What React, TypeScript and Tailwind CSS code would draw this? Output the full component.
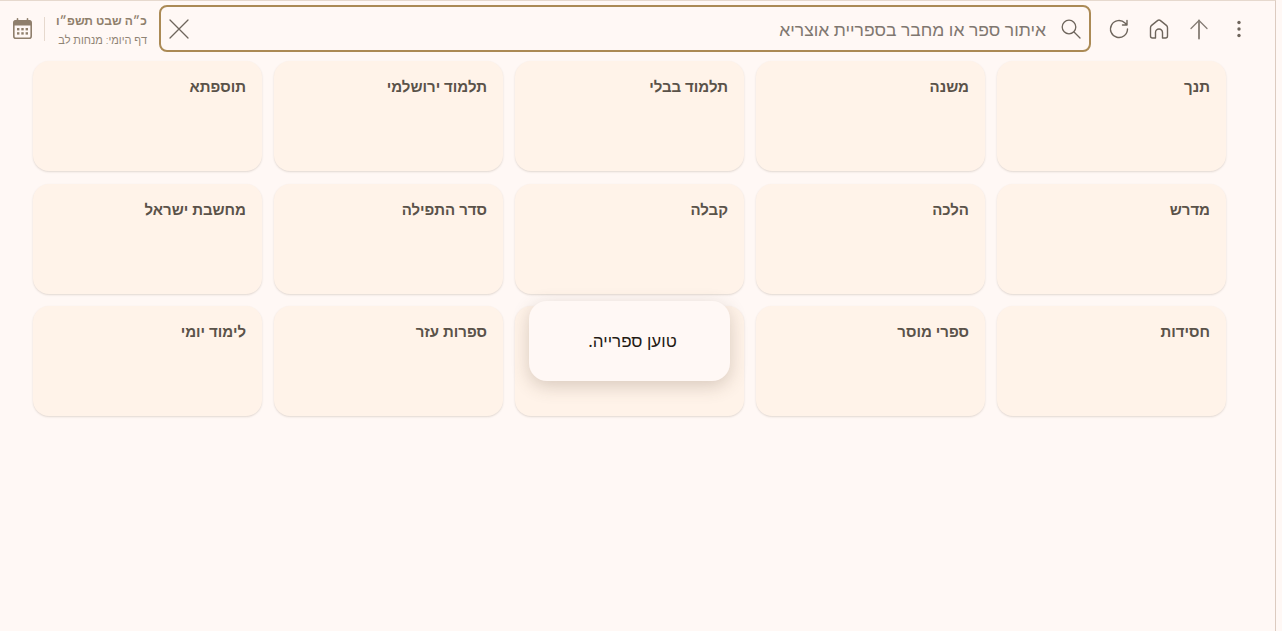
import React from 'react';

const categories = [
  'תנך', 'משנה', 'תלמוד בבלי', 'תלמוד ירושלמי', 'תוספתא',
  'מדרש', 'הלכה', 'קבלה', 'סדר התפילה', 'מחשבת ישראל',
  'חסידות', 'ספרי מוסר', '', 'ספרות עזר', 'לימוד יומי',
];

const font = "font-['Noto_Sans','Liberation_Sans',sans-serif]";

const Icon: React.FC<{ children: React.ReactNode }> = ({ children }) => (
  <svg width="24" height="24" viewBox="0 0 24 24" fill="none" stroke="currentColor" strokeWidth="1.4" strokeLinecap="round" strokeLinejoin="round">
    {children}
  </svg>
);

const CalendarIcon: React.FC = () => (
  <svg width="19" height="21" viewBox="0 0 19 21" fill="none" className="shrink-0 text-[#8f7f6c]">
    <rect x="0.8" y="2.8" width="17.4" height="17.4" rx="2" stroke="currentColor" strokeWidth="1.6" />
    <path d="M1 4a2 2 0 0 1 2-2h13a2 2 0 0 1 2 2v3.5H1z" fill="currentColor" />
    <path d="M4.5 0.8v3M14.5 0.8v3" stroke="currentColor" strokeWidth="1.6" strokeLinecap="round" />
    <g fill="currentColor">
      <rect x="4" y="10" width="2.4" height="2.4" />
      <rect x="8.3" y="10" width="2.4" height="2.4" />
      <rect x="12.6" y="10" width="2.4" height="2.4" />
      <rect x="4" y="14.2" width="2.4" height="2.4" />
      <rect x="8.3" y="14.2" width="2.4" height="2.4" />
      <rect x="12.6" y="14.2" width="2.4" height="2.4" />
    </g>
  </svg>
);

const App: React.FC = () => {
  return (
    <div dir="rtl" className={`relative h-[631px] w-[1282px] overflow-hidden bg-[#fff8f5] ${font}`}>
      <div className="mr-[6px] h-full border-t border-r border-t-[#e6d9ce] border-r-[#dccbc0]">
        {/* Top bar */}
        <div className="flex h-[55px] items-center pr-[16px] pl-[13px] text-[#6e655c]">
          <button className="flex h-10 w-10 items-center justify-center">
            <svg width="24" height="24" viewBox="0 0 24 24" fill="currentColor">
              <circle cx="12" cy="5.5" r="1.7" />
              <circle cx="12" cy="12" r="1.7" />
              <circle cx="12" cy="18.5" r="1.7" />
            </svg>
          </button>
          <button className="flex h-10 w-10 items-center justify-center text-[#857c74]">
            <Icon>
              <path d="M12 21.5V3.5" strokeWidth="1.8" />
              <path d="M4 11.5L12 3.5L20 11.5" strokeWidth="1.3" />
            </Icon>
          </button>
          <button className="flex h-10 w-10 items-center justify-center">
            <Icon>
              <path d="M10.8 3.4a2 2 0 0 1 2.4 0l6.2 5a3 3 0 0 1 1.1 2.3V19a2 2 0 0 1-2 2h-3V15.5a3.5 3.5 0 0 0-7 0V21h-3a2 2 0 0 1-2-2V10.7a3 3 0 0 1 1.1-2.3z" />
            </Icon>
          </button>
          <button className="flex h-10 w-10 items-center justify-center">
            <Icon>
              <path d="M20.5 12a8.5 8.5 0 1 1-2.5-6L20 8M20 3.5V8H15.5" />
            </Icon>
          </button>
          {/* Search */}
          <div className="mr-2 flex h-[47px] flex-1 items-center rounded-lg border-[2.5px] border-[#ab8a55] px-[6px]">
            <Icon>
              <circle cx="10" cy="10" r="6.8" strokeWidth="1.3" />
              <path d="M15 15L21 21" strokeWidth="1.3" />
            </Icon>
            <span className="mt-[2px] mr-[13px] flex-1 text-[17.5px] font-light text-[#7f7770]">איתור ספר או מחבר בספריית אוצריא</span>
            <Icon>
              <path d="M3 3L21 21M21 3L3 21" strokeWidth="1.3" />
            </Icon>
          </div>
          {/* Date */}
          <div className="mt-[4px] mr-3 flex w-[90px] shrink-0 flex-col gap-[3px] whitespace-nowrap">
            <span className="text-xs leading-4 font-bold text-[#8f7f6c]">כ״ה שבט תשפ״ו</span>
            <span className="text-[11px] leading-4 font-light text-[#8f8374]">דף היומי: מנחות לב</span>
          </div>
          <div className="mx-3 h-6 w-px shrink-0 bg-[#e6d9ce]" />
          <CalendarIcon />
        </div>
        {/* Library grid */}
        <div className="mt-[5px] grid grid-cols-5 gap-x-3 gap-y-[12.5px] pr-[49px] pl-[33px]">
          {categories.map((name, i) => (
            <div key={i} className="h-[110px] rounded-2xl bg-[#fff3e9] px-4 pt-[13px] shadow-[0_1px_2px_rgba(90,70,50,0.18)]">
              <span className="text-[15px] font-semibold text-[#5a5249]">{name}</span>
            </div>
          ))}
        </div>
      </div>
      {/* Loading toast */}
      <div className="absolute top-[301px] left-[529px] flex h-20 w-[201px] items-center justify-center rounded-[18px] bg-[#fff8f5] pr-[1px] pl-[7px] text-[17px] text-[#241a14] shadow-[0_5px_18px_rgba(90,70,50,0.24)]">
        טוען ספרייה.
      </div>
    </div>
  );
};

export default App;
